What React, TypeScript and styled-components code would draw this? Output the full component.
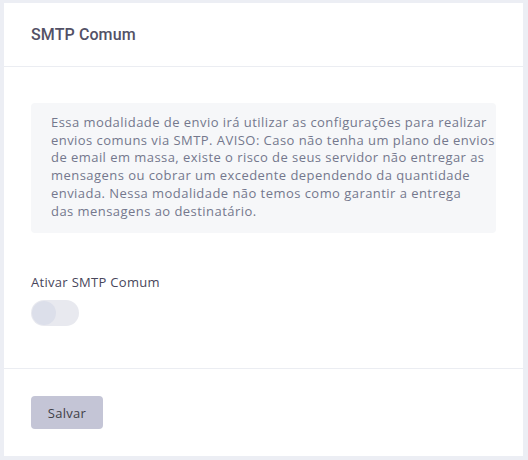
import React from "react";
import styled, { createGlobalStyle } from "styled-components";

const Global = createGlobalStyle`
  html, body { margin: 0; padding: 0; background: #eceef4; }
  body { font-family: "Open Sans", "Liberation Sans", sans-serif; }
  * { box-sizing: border-box; }
`;

const Page = styled.div`
  padding: 3px 5px 4px 4px;
  background: #eceef4;
  min-height: 460px;
`;

const Card = styled.div`
  background: #fff;
  width: 519px;
  height: 453px;
  display: flex;
  flex-direction: column;
`;

const Header = styled.div`
  height: 64px;
  border-bottom: 1px solid #ebedf2;
  display: flex;
  align-items: center;
  padding: 0 27px;
`;

const Title = styled.h3`
  margin: 0;
  font-family: Roboto, "Liberation Sans", sans-serif;
  font-weight: 500;
  font-size: 16px;
  color: #535166;
  letter-spacing: 0.1px;
`;

const Body = styled.div`
  padding: 36px 27px 0 27px;
  height: 303px;
  border-bottom: 1px solid #ebedf2;
`;

const Info = styled.div`
  background: #f6f7f9;
  border-radius: 4px;
  padding: 11px 20px;
  width: 465px;
  height: 130px;
  font-family: "Open Sans", sans-serif;
  font-size: 13px;
  line-height: 17.8px;
  color: #74788d;
  letter-spacing: 0.45px;
`;

const Line = styled.span`
  display: block;
  white-space: nowrap;
`;

const Label = styled.div`
  margin-top: 40px;
  font-family: "Open Sans", sans-serif;
  font-size: 13px;
  line-height: 18px;
  letter-spacing: 0.3px;
  color: #48465b;
`;

const Switch = styled.div<{ $on?: boolean }>`
  margin-top: 9px;
  width: 48px;
  height: 26px;
  border-radius: 13px;
  background: #e8e9ef;
  position: relative;
  &::after {
    content: "";
    position: absolute;
    top: 1px;
    left: ${(p) => (p.$on ? "23px" : "1px")};
    width: 24px;
    height: 24px;
    border-radius: 50%;
    background: #dcdfea;
  }
`;

const Footer = styled.div`
  padding: 27px 27px;
`;

const Button = styled.button`
  width: 72px;
  height: 33px;
  border: none;
  border-radius: 4px;
  background: #c4c5d6;
  color: #3f4047;
  font-family: "Open Sans", sans-serif;
  font-size: 13px;
  letter-spacing: 0.3px;
  padding: 0;
  cursor: pointer;
`;

const infoLines = [
  "Essa modalidade de envio irá utilizar as configurações para realizar",
  "envios comuns via SMTP. AVISO: Caso não tenha um plano de envios",
  "de email em massa, existe o risco de seus servidor não entregar as",
  "mensagens ou cobrar um excedente dependendo da quantidade",
  "enviada. Nessa modalidade não temos como garantir a entrega",
  "das mensagens ao destinatário.",
];

export default function App() {
  return (
    <Page>
      <Global />
      <Card>
        <Header>
          <Title>SMTP Comum</Title>
        </Header>
        <Body>
          <Info>
            {infoLines.map((l) => (
              <Line key={l}>{l}</Line>
            ))}
          </Info>
          <Label>Ativar SMTP Comum</Label>
          <Switch />
        </Body>
        <Footer>
          <Button>Salvar</Button>
        </Footer>
      </Card>
    </Page>
  );
}
